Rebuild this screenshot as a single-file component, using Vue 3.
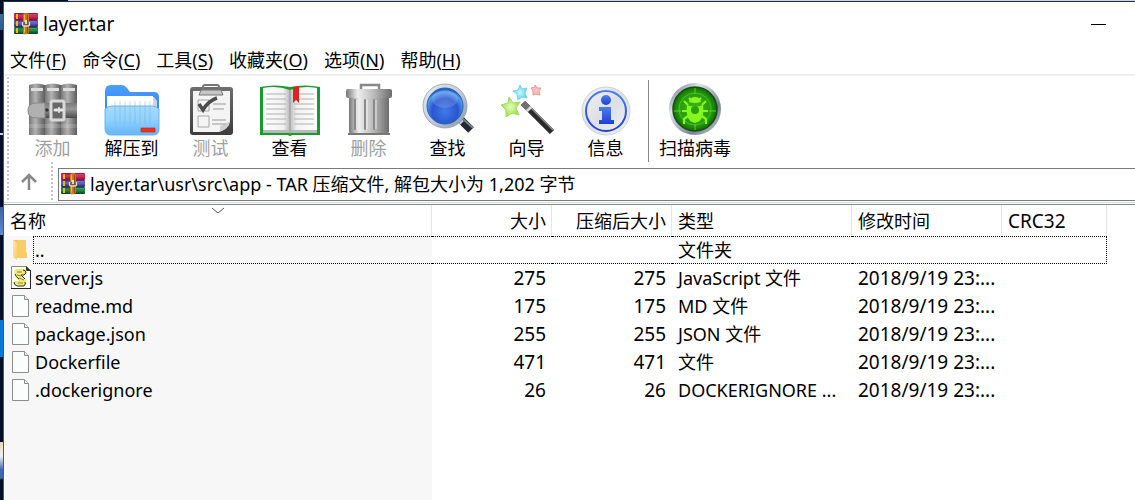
<template>
  <div class="desktop">
    <!-- 图标定义 -->
    <svg class="sprite" width="0" height="0" aria-hidden="true">
      <defs>
        <linearGradient id="g-red" x1="0" y1="0" x2="0" y2="1">
          <stop offset="0" stop-color="#8e1230" />
          <stop offset=".4" stop-color="#e0305c" />
          <stop offset="1" stop-color="#8a0f2c" />
        </linearGradient>
        <linearGradient id="g-violet" x1="0" y1="0" x2="0" y2="1">
          <stop offset="0" stop-color="#34307c" />
          <stop offset=".4" stop-color="#6a68c4" />
          <stop offset="1" stop-color="#2a2568" />
        </linearGradient>
        <linearGradient id="g-green" x1="0" y1="0" x2="0" y2="1">
          <stop offset="0" stop-color="#0c5a2c" />
          <stop offset=".4" stop-color="#28944e" />
          <stop offset="1" stop-color="#073f1c" />
        </linearGradient>
        <linearGradient id="g-book" x1="0" y1="0" x2="1" y2="0">
          <stop offset="0" stop-color="#787878" />
          <stop offset=".4" stop-color="#b2b2b2" />
          <stop offset="1" stop-color="#5c5c5c" />
        </linearGradient>
        <linearGradient id="g-belt" x1="0" y1="0" x2="0" y2="1">
          <stop offset="0" stop-color="#777" />
          <stop offset=".4" stop-color="#999" />
          <stop offset="1" stop-color="#4a4a4a" />
        </linearGradient>
        <linearGradient id="g-folder-back" x1="0" y1="0" x2="0" y2="1">
          <stop offset="0" stop-color="#4aa0fb" />
          <stop offset="1" stop-color="#2f6fe8" />
        </linearGradient>
        <linearGradient id="g-folder-front" x1="0" y1="0" x2="0" y2="1">
          <stop offset="0" stop-color="#a4dcfd" />
          <stop offset=".5" stop-color="#8fd0fc" />
          <stop offset="1" stop-color="#64b4f8" />
        </linearGradient>
        <linearGradient id="g-board" x1="0" y1="0" x2="0" y2="1">
          <stop offset="0" stop-color="#6e6e6e" />
          <stop offset="1" stop-color="#3c3c3c" />
        </linearGradient>
        <linearGradient id="g-page-l" x1="0" y1="0" x2="1" y2="0">
          <stop offset="0" stop-color="#fff" />
          <stop offset=".75" stop-color="#f1f1f1" />
          <stop offset="1" stop-color="#b8b8b8" />
        </linearGradient>
        <linearGradient id="g-page-r" x1="0" y1="0" x2="1" y2="0">
          <stop offset="0" stop-color="#bdbdbd" />
          <stop offset=".25" stop-color="#f1f1f1" />
          <stop offset="1" stop-color="#fff" />
        </linearGradient>
        <linearGradient id="g-metal" x1="0" y1="0" x2="1" y2="0">
          <stop offset="0" stop-color="#777" />
          <stop offset=".25" stop-color="#eee" />
          <stop offset=".6" stop-color="#bbb" />
          <stop offset="1" stop-color="#6c6c6c" />
        </linearGradient>
        <radialGradient id="g-lens" cx=".5" cy=".65" r=".6">
          <stop offset="0" stop-color="#3f7be8" />
          <stop offset=".6" stop-color="#2b55d0" />
          <stop offset=".9" stop-color="#4fa0ee" />
          <stop offset="1" stop-color="#2a5fc0" />
        </radialGradient>
        <linearGradient id="g-ring" x1="0" y1="0" x2="1" y2="1">
          <stop offset="0" stop-color="#e8eef5" />
          <stop offset=".5" stop-color="#c4cfdc" />
          <stop offset="1" stop-color="#8494a6" />
        </linearGradient>
        <linearGradient id="g-info" x1="0" y1="0" x2="1" y2="1">
          <stop offset="0" stop-color="#f4f5f7" />
          <stop offset=".5" stop-color="#dcdfe5" />
          <stop offset="1" stop-color="#f2f3f5" />
        </linearGradient>
        <linearGradient id="g-blue" x1="0" y1="0" x2="0" y2="1">
          <stop offset="0" stop-color="#4a80ea" />
          <stop offset="1" stop-color="#1f3fd8" />
        </linearGradient>
        <linearGradient id="g-chrome" x1="0" y1="0" x2="1" y2="1">
          <stop offset="0" stop-color="#59616e" />
          <stop offset=".3" stop-color="#dfe4ec" />
          <stop offset=".7" stop-color="#7b8496" />
          <stop offset="1" stop-color="#c9cedb" />
        </linearGradient>
        <radialGradient id="g-radar">
          <stop offset="0" stop-color="#3fb81a" />
          <stop offset=".75" stop-color="#259a0c" />
          <stop offset="1" stop-color="#0f6a06" />
        </radialGradient>
        <linearGradient id="g-yellow" x1="0" y1="0" x2="1" y2="1">
          <stop offset="0" stop-color="#ffe9a6" />
          <stop offset="1" stop-color="#fbcf62" />
        </linearGradient>
        <radialGradient id="g-star-green">
          <stop offset="0" stop-color="#e4fcc0" />
          <stop offset="1" stop-color="#98e040" />
        </radialGradient>
        <radialGradient id="g-star-cyan">
          <stop offset="0" stop-color="#d0f8ff" />
          <stop offset="1" stop-color="#58d4f0" />
        </radialGradient>
      </defs>

      <symbol id="i-rar" viewBox="0 0 24 22">
        <rect width="24" height="7" rx="1" fill="url(#g-red)" />
        <rect y="7" width="24" height="7" rx="1" fill="url(#g-violet)" />
        <rect y="14" width="24" height="7" rx="1" fill="url(#g-green)" />
        <path d="M3 1v5M3 8v5M3 15v5" stroke="#f0b820" stroke-width="2" />
        <path d="M15 1.500h8M15 8.500h8M15 15.500h8" stroke="#fff" stroke-opacity=".2" />
        <path d="M9 2q0-2 3-2t3 2v18q-3 2-6 1z" fill="#c87818" />
        <path d="M10.500 1.500v18" stroke="#f2b64a" />
        <path d="M13.500 2v18" stroke="#8f4c0c" />
        <path d="M8.500 9v3q0 1 2 1h3q2 0 2-1V9" fill="#7a5a3a" stroke="#dcdcdc" stroke-width="1.300" />
        <path d="M12 7v4" stroke="#fff" stroke-width="1.500" />
      </symbol>

      <symbol id="i-add" viewBox="0 0 54 54">
        <path d="M3 3q8-3 16 0v50H3z" fill="url(#g-book)" />
        <path d="M19 3q8-3 16 0v50H19z" fill="url(#g-book)" />
        <path d="M35 3q8-3 16 0v50H35z" fill="url(#g-book)" />
        <path d="M5 6h12v3H5zM21 6h12v3H21zM37 6h12v3H37z" fill="#ddd" />
        <path d="M3 42h48v4H3z" fill="#fff" fill-opacity=".15" />
        <path d="M10 21h41v15H10q-8 0-8-7.500T10 21z" fill="url(#g-belt)" />
        <path d="M10 21h9v15h-9q-8 0-8-7.500T10 21z" fill="#b0b0b0" stroke="#8a8a8a" />
        <circle cx="21" cy="28" r="1.800" fill="#333" />
        <rect x="25" y="19" width="13" height="19" rx="2" fill="#686868" stroke="#d9d9d9" stroke-width="3" />
        <path d="M29 28h7" stroke="#e6e6e6" stroke-width="3" stroke-linecap="round" />
        <path d="M33 25v6" stroke="#e6e6e6" stroke-width="1.500" />
      </symbol>

      <symbol id="i-extract" viewBox="0 0 54 54">
        <path d="M0 9q0-6 6-6h10q4 0 6 3l3 4h24q5 0 5 5v30H0z" fill="url(#g-folder-back)" />
        <path d="M3 15h46l3 4v14H3z" fill="#cbd4df" />
        <path d="M2 14h46v22H2z" fill="#fff" />
        <path d="M0 27q3-3 7-3h40q4 0 7 3v20q0 6-6 6H6q-6 0-6-6z" fill="url(#g-folder-front)" stroke="#6bb5ee" />
        <path d="M10 19v23M15 19v23M20 19v23M25 19v23M30 19v23M35 19v23M40 19v23M45 19v23" stroke="#6ea5d4" stroke-opacity=".4" />
        <path d="M36 46h14v4H36z" fill="#f0321c" stroke="#c71e0c" stroke-width=".6" />
      </symbol>

      <symbol id="i-test" viewBox="0 0 54 54">
        <rect x="6" y="5" width="43" height="48" rx="3" fill="url(#g-board)" />
        <path d="M9 9h37v30q-1 8-11 11H9z" fill="#f4f4f4" />
        <path d="M46 39q-1 8-11 11 2-3 1-6 5-1 10-5z" fill="#cfcfcf" />
        <path d="M14 18h11v11H14zM14 34h11v11H14z" fill="#f4f4f4" stroke="#a5a5a5" />
        <path d="M15 22l4 6q5-9 14-12" fill="none" stroke="#4b4b4b" stroke-width="3.500" />
        <path d="M29 22h13M29 27h11M28 38h14M28 42h14" stroke="#999" />
        <path d="M19 8V5q0-2 2-2h12q2 0 2 2v3z" fill="none" stroke="#777" stroke-width="2" />
        <path d="M17 8h20l2 5H15z" fill="#c5c5c5" stroke="#777" />
      </symbol>

      <symbol id="i-view" viewBox="0 0 60 54">
        <path d="M0 5q15-3 30 0 15-3 30 0v48H32q-2 2-4 0H0z" fill="#189a2c" />
        <path d="M3 6q14-3 27 2v43H3z" fill="url(#g-page-l)" />
        <path d="M57 6q-14-3-27 2v43h27z" fill="url(#g-page-r)" />
        <path d="M3 48h54v3H3z" fill="#b9b9b9" />
        <path d="M30 8v44" stroke="#999" />
        <path d="M6 12h20M6 17h20M6 22h20M6 27h20M6 32h20M6 37h20M6 42h20M34 12h20M34 17h20M34 22h20M34 27h20M34 32h20M34 37h20M34 42h20" stroke="#b0b0b0" />
        <path d="M33 5l6-1v17l-3-3-3 3z" fill="#d92425" />
      </symbol>

      <symbol id="i-delete" viewBox="0 0 54 54">
        <path d="M19 7V3h18v4" fill="none" stroke="#888" stroke-width="2.500" />
        <path d="M7 14h40v35q0 3-3 3H10q-3 0-3-3z" fill="url(#g-metal)" />
        <path d="M13 18v29M23 18v29M32 18v29M41 18v29" stroke="#8a8a8a" stroke-width="2" stroke-linecap="round" />
        <path d="M15 18v29M25 18v29M34 18v29" stroke="#fff" stroke-opacity=".7" />
        <rect x="4" y="7" width="46" height="9" rx="2" fill="url(#g-metal)" />
        <path d="M6 52h42" stroke="#777" stroke-width="2" />
      </symbol>

      <symbol id="i-find" viewBox="0 0 54 54">
        <path d="M40 38l10 10" stroke="#23272e" stroke-width="8" />
        <path d="M42 37l10 9" stroke="#747e8c" stroke-width="2" />
        <path d="M36 36l5 5" stroke="#bec5ce" stroke-width="5" />
        <circle cx="24" cy="24" r="22" fill="url(#g-ring)" stroke="#8d9bab" stroke-width=".8" />
        <circle cx="24" cy="24" r="18" fill="url(#g-lens)" stroke="#2d5fb4" />
        <ellipse cx="24" cy="17" rx="13" ry="9" fill="#fff" fill-opacity=".15" />
      </symbol>

      <symbol id="i-wizard" viewBox="0 0 54 54">
        <path d="M23 21l29 29" stroke="#2a2a2a" stroke-width="6" />
        <path d="M25 20l28 28" stroke="#8c8c8c" stroke-width="1.500" />
        <path d="M23 21l5 5" stroke="#707070" stroke-width="6" />
        <path d="M28 26l2 2" stroke="#ddd" stroke-width="6" />
        <path d="M9 15l4 6 7-1-4 6 3 7-7-2-6 4v-7l-5-5 7-2z" fill="url(#g-star-green)" stroke="#9cdf58" />
        <path d="M20 3l2 4 5-1-2 5 2 5-5-1-4 3-1-6-4-3 5-1z" fill="url(#g-star-cyan)" stroke="#70d8f0" />
        <path d="M35 3l2 3h4l-2 3 1 4-4-1-3 1v-4l-2-3 4-1z" fill="#fcc0c0" stroke="#f49090" />
      </symbol>

      <symbol id="i-info" viewBox="0 0 54 54">
        <circle cx="27" cy="29" r="24" fill="url(#g-info)" stroke="#cdd1d8" />
        <circle cx="27" cy="29" r="20" fill="none" stroke="url(#g-blue)" stroke-width="2" />
        <circle cx="27" cy="18" r="5" fill="url(#g-blue)" />
        <path d="M20 25h12v13h3v4H20v-4h3v-9h-3z" fill="url(#g-blue)" />
      </symbol>

      <symbol id="i-virus" viewBox="0 0 54 54">
        <circle cx="27" cy="27" r="26" fill="url(#g-chrome)" />
        <circle cx="27" cy="27" r="22" fill="url(#g-radar)" stroke="#184c10" stroke-width="1.500" />
        <circle cx="27" cy="27" r="16" fill="none" stroke="#62d13b" stroke-opacity=".6" />
        <path d="M27 6v6M27 42v6M6 29h7M41 29h7" stroke="#55d330" />
        <g stroke="#86f61f" stroke-width="2.200" fill="none">
          <path d="M20 23l-4-4M34 23l4-4M19 29h-5M35 29h5M20 34l-4 3v5M34 34l4 3v5M23 18l-2-2M31 18l2-2" />
        </g>
        <path d="M21 20q1-5 6-5t6 5q-6 2-12 0z" fill="#86f61f" />
        <path d="M19 23q8 3 16 0 2 16-8 18-10-2-8-18z" fill="#86f61f" />
        <circle cx="27" cy="28" r="4" fill="#2aa10e" />
      </symbol>

      <symbol id="i-folder" viewBox="0 0 20 24">
        <path d="M2 2h5v16l-4 2-1-2z" fill="#f3c763" />
        <path d="M6 2h9v12l1 1v5H6z" fill="#f8cd68" />
        <path d="M2 2l4 3v17l-4-3z" fill="url(#g-yellow)" />
      </symbol>

      <symbol id="i-script" viewBox="0 0 20 24">
        <path d="M.5.500h15l4 4v18H.5z" fill="#fff" stroke="#888" />
        <path d="M0 22.500h20M19.500 4v19" stroke="#222" />
        <path d="M15 0v5h5z" fill="#333" />
        <path d="M5 3h9q3 2 1 5l-2 1h-3l5 5q2 5-3 6H5q-4-2-1-5h4l-4-5Q2 5 5 3z" fill="#f0eb70" />
        <path d="M12 4q3 0 3 3l-2 2h-3l4 4M4 8q1 3 4 5M3 16q0 3 3 4h7q2-2 1-4" fill="none" stroke="#333" />
        <path d="M6 6h5M6 9l4 1M8 12l5 2M7 17h5" stroke="#8d8a3a" />
      </symbol>

      <symbol id="i-file" viewBox="0 0 20 24">
        <path d="M1.500 1.500h12l4 4v17h-16z" fill="#fbfcfc" stroke="#8d8d8d" />
        <path d="M13.500 1.500v4h4" fill="#e8e8e8" stroke="#8d8d8d" />
      </symbol>
    </svg>

    <div class="window">
      <header class="title-bar">
        <svg class="rar-icon"><use href="#i-rar" /></svg>
        <h1 class="title">layer.tar</h1>
        <button class="minimize" aria-label="最小化"><span></span></button>
      </header>

      <nav class="menu-bar">
        <button v-for="menu in menus" :key="menu.key" class="menu-item">{{ menu.label }}(<u>{{ menu.key }}</u>)</button>
      </nav>

      <div class="toolbar">
        <span class="grip"></span>
        <button
          v-for="tool in tools"
          :key="tool.icon"
          class="tool"
          :class="{ wide: tool.wide }"
          :disabled="tool.disabled"
        >
          <svg class="tool-icon"><use :href="'#i-' + tool.icon" /></svg>
          <span>{{ tool.label }}</span>
        </button>
      </div>

      <div class="address-bar">
        <span class="grip"></span>
        <button class="up" aria-label="上一级">
          <svg width="18" height="18" viewBox="0 0 18 18">
            <path d="M9 17V3M2 9l7-7 7 7" fill="none" stroke="#888" stroke-width="2.500" />
          </svg>
        </button>
        <span class="grip"></span>
        <div class="path-box">
          <svg class="rar-icon"><use href="#i-rar" /></svg>
          <input v-model="path" class="path" type="text" aria-label="路径" />
        </div>
      </div>

      <main class="file-list">
        <table class="files">
          <colgroup>
            <col class="col-name" />
            <col class="col-size" />
            <col class="col-size" />
            <col class="col-type" />
            <col class="col-date" />
            <col class="col-crc" />
          </colgroup>
          <thead>
            <tr>
              <th class="sorted">
                名称
                <svg class="sort-mark" width="14" height="7" viewBox="0 0 14 7">
                  <path d="M1 1l6 5 6-5" fill="none" stroke="#555" />
                </svg>
              </th>
              <th class="num">大小</th>
              <th class="num">压缩后大小</th>
              <th>类型</th>
              <th>修改时间</th>
              <th class="digits">CRC32</th>
            </tr>
          </thead>
          <tbody>
            <tr v-for="file in files" :key="file.name" :class="{ focused: file.name === focused }">
              <td class="name">
                <div class="name-inner">
                  <svg class="file-icon"><use :href="'#i-' + file.icon" /></svg>
                  <span class="file-name">{{ file.name }}</span>
                </div>
              </td>
              <td class="num digits">{{ file.size }}</td>
              <td class="num digits">{{ file.size }}</td>
              <td>{{ file.type }}</td>
              <td class="digits">{{ file.date }}</td>
              <td></td>
            </tr>
          </tbody>
        </table>
      </main>
    </div>
  </div>
</template>

<script setup>
import { ref } from 'vue'

const path = ref('layer.tar\\usr\\src\\app - TAR 压缩文件, 解包大小为 1,202 字节')
const focused = ref('..')

const menus = [
  { label: '文件', key: 'F' },
  { label: '命令', key: 'C' },
  { label: '工具', key: 'S' },
  { label: '收藏夹', key: 'O' },
  { label: '选项', key: 'N' },
  { label: '帮助', key: 'H' }
]

const tools = [
  { label: '添加', icon: 'add', disabled: true },
  { label: '解压到', icon: 'extract' },
  { label: '测试', icon: 'test', disabled: true },
  { label: '查看', icon: 'view' },
  { label: '删除', icon: 'delete', disabled: true },
  { label: '查找', icon: 'find' },
  { label: '向导', icon: 'wizard' },
  { label: '信息', icon: 'info' },
  { label: '扫描病毒', icon: 'virus', wide: true }
]

const files = [
  { name: '..', icon: 'folder', type: '文件夹' },
  { name: 'server.js', icon: 'script', size: 275, type: 'JavaScript 文件', date: '2018/9/19 23:...' },
  { name: 'readme.md', icon: 'file', size: 175, type: 'MD 文件', date: '2018/9/19 23:...' },
  { name: 'package.json', icon: 'file', size: 255, type: 'JSON 文件', date: '2018/9/19 23:...' },
  { name: 'Dockerfile', icon: 'file', size: 471, type: '文件', date: '2018/9/19 23:...' },
  { name: '.dockerignore', icon: 'file', size: 26, type: 'DOCKERIGNORE ...', date: '2018/9/19 23:...' }
]
</script>

<style>
body {
  margin: 0;
  overflow: hidden;
}
</style>

<style scoped>
.desktop {
  box-sizing: border-box;
  min-height: 100vh;
  display: flex;
  padding: 1px 0 0 3px;
  background:
    linear-gradient(#d4d4d4, #d4d4d4) 68px 0 / 100% 1px no-repeat,
    linear-gradient(
      #04102a 14px, #3d6c9c 14px, #2c5b8c 30px, #04102a 30px,
      #04102a 133px, #c8d4e0 133px, #c8d4e0 135px, #04102a 135px,
      #04102a 207px, #3863ac 207px, #5d8ad0 235px, #04102a 235px,
      #04102a 320px, #0a78d8 320px, #0a78d8 357px, #04102a 357px,
      #04102a 442px, #e8d8b0 442px, #f0f0f0 456px, #3d66b8 470px,
      #3d66b8 478px, #04102a 480px
    );
  font-family: "Noto Sans", "Noto Sans CJK SC", sans-serif;
  font-size: 18px;
  line-height: 28px;
  color: #000;
}

.sprite {
  position: absolute;
}

button {
  margin: 0;
  padding: 0;
  border: none;
  background: none;
  font: inherit;
  color: inherit;
}

.window {
  flex: 1;
  min-width: 0;
  display: flex;
  flex-direction: column;
  border-top: 1px solid #1c3048;
  border-left: 1px solid #46586c;
  background: #fff;
}

.title-bar {
  display: flex;
  align-items: center;
  height: 44px;
  padding-left: 10px;
}

.rar-icon {
  flex-shrink: 0;
  width: 24px;
  height: 22px;
}

.title {
  margin: 0 0 0 5px;
  font-size: 19px;
  font-weight: 400;
}

.minimize {
  width: 46px;
  height: 32px;
  margin-left: auto;
  margin-right: 14px;
}

.minimize span {
  display: block;
  width: 15px;
  height: 1px;
  margin: 0 auto;
  background: #000;
}

.menu-bar {
  display: flex;
  gap: 16px;
  height: 28px;
  padding-left: 6px;
  border-bottom: 2px solid #f0f0f0;
}

.menu-item {
  white-space: nowrap;
}

.menu-item u {
  text-underline-offset: 2px;
}

.toolbar {
  display: flex;
  height: 86px;
}

.grip {
  width: 2px;
  margin: 1px 4px 0 3px;
  background: repeating-linear-gradient(#c4c4c4 0 2px, #fff 2px 4px);
}

.tool {
  display: flex;
  flex-direction: column;
  align-items: center;
  width: 79px;
  padding-top: 6px;
}

.tool.wide {
  width: 93px;
  margin: 4px 0 0 3px;
  padding-top: 2px;
  border-left: 1px solid #888;
}

.tool-icon {
  width: 60px;
  height: 54px;
}

.tool span {
  line-height: 24px;
}

.tool:disabled {
  color: #a0a0a0;
}

.address-bar {
  display: flex;
  height: 40px;
  border-bottom: 1px solid #d8d8d8;
}

.address-bar .grip {
  margin-top: 0;
}

.up {
  display: flex;
  align-items: center;
  justify-content: center;
  width: 32px;
  margin-right: 3px;
}

.path-box {
  box-sizing: border-box;
  flex: 1;
  display: flex;
  align-items: center;
  height: 33px;
  margin: 6px 0 0 1px;
  padding: 0 0 2px 2px;
  border: 1px solid #7a7a7a;
  border-right: none;
}

.path {
  flex: 1;
  min-width: 0;
  margin: 0;
  padding: 0 0 0 5px;
  border: none;
  outline: none;
  background: none;
  font: inherit;
  color: inherit;
}

.file-list {
  flex: 1;
  margin-top: 1px;
  border-top: 1px solid #828790;
  background: linear-gradient(#f7f7f7, #f7f7f7) 1px 31px / 427px 100% no-repeat;
}

.files {
  table-layout: fixed;
  width: 1103px;
  border-collapse: separate;
  border-spacing: 0;
}

.col-name {
  width: 428px;
}

.col-size {
  width: 120px;
}

.col-type {
  width: 180px;
}

.col-date {
  width: 150px;
}

.col-crc {
  width: 105px;
}

th {
  position: relative;
  box-sizing: border-box;
  height: 31px;
  padding: 0 5px 0 6px;
  border-right: 1px solid #e5e5e5;
  background: #fff;
  font-weight: 400;
  text-align: left;
}

.sort-mark {
  position: absolute;
  top: 2px;
  left: 50%;
  margin-left: -7px;
}

td {
  box-sizing: border-box;
  height: 28px;
  padding: 0 6px;
  line-height: 26px;
  white-space: nowrap;
  border-top: 1px solid transparent;
  border-bottom: 1px solid transparent;
}

.num {
  text-align: right;
}

.digits {
  font-size: 19px;
}

td.name {
  padding: 0;
  border: none;
}

.name-inner {
  display: flex;
  align-items: center;
  padding-left: 7px;
}

.file-icon {
  flex-shrink: 0;
  width: 20px;
  height: 24px;
}

.file-name {
  flex: 1;
  margin-left: 2px;
  padding-left: 1px;
  border: 1px solid transparent;
  border-right: none;
}

.focused td:not(.name),
.focused .file-name {
  border-top: 1px dotted #000;
  border-bottom: 1px dotted #000;
}

.focused .file-name {
  border-left: 1px dotted #000;
}

.focused td:last-child {
  border-right: 1px dotted #000;
}
</style>
